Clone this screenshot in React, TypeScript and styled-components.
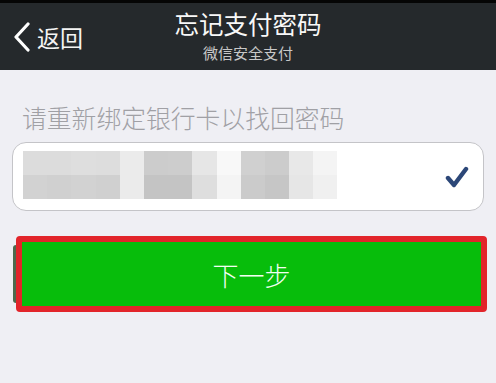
import React from 'react';
import styled, { createGlobalStyle } from 'styled-components';

const GlobalStyle = createGlobalStyle`
  html, body {
    margin: 0;
    padding: 0;
    background: #efeff4;
    font-family: "Noto Sans CJK SC", "Liberation Sans", sans-serif;
  }
`;

// mosaic over the card number, [top, bottom]
const mosaic: [string, string][] = [
  ['#dcdcdc', '#d2d2d2'],
  ['#dcdcdc', '#d0d0d0'],
  ['#dedede', '#d2d2d2'],
  ['#dddddd', '#d0d0d0'],
  ['#ebebeb', '#ebebeb'],
  ['#cccccc', '#c4c4c4'],
  ['#cdcdcd', '#c4c4c4'],
  ['#e6e6e6', '#dedede'],
  ['#f8f8f8', '#f4f4f4'],
  ['#d0d0d0', '#cbcbcb'],
  ['#cccccc', '#c6c6c6'],
  ['#e8e8e8', '#e6e6e6'],
  ['#f4f4f4', '#f0f0f0'],
];

const App: React.FC = () => {
  return (
    <>
      <GlobalStyle />
      <StyledPage>
        <StatusStrip />
        <StyledHeader>
          <BackButton>
            <svg width="18" height="30" viewBox="0 0 18 30">
              <polyline points="15,2 3,15 15,28" fill="none" stroke="#fff" strokeWidth="3.2" strokeLinecap="round" strokeLinejoin="round" />
            </svg>
            <span>返回</span>
          </BackButton>
          <TitleBox>
            <Title>忘记支付密码</Title>
            <SubTitle>微信安全支付</SubTitle>
          </TitleBox>
          <div />
        </StyledHeader>
        <StyledBody>
          <Label>请重新绑定银行卡以找回密码</Label>
          <CardInput>
            <Mosaic>
              {mosaic.map(([top, bottom], i) => (
                <MosaicCol key={i}>
                  <MosaicCell color={top} />
                  <MosaicCell color={bottom} />
                </MosaicCol>
              ))}
            </Mosaic>
            <svg width="24" height="22" viewBox="0 0 24 22">
              <path d="M3 12 L9 19 L21 3" fill="none" stroke="#2c4778" strokeWidth="4.4" strokeLinecap="round" strokeLinejoin="round" />
            </svg>
          </CardInput>
          <ButtonRow>
            <ButtonEdge />
            <NextButton>下一步</NextButton>
          </ButtonRow>
        </StyledBody>
      </StyledPage>
    </>
  );
};

const StyledPage = styled.div`
  width: 496px;
  height: 383px;
  display: flex;
  flex-direction: column;
  background: #efeff4;
  overflow: hidden;
`;

const StatusStrip = styled.div`
  height: 3px;
  background: #050505;
`;

const StyledHeader = styled.div`
  height: 67px;
  background: #25292c;
  display: grid;
  grid-template-columns: 1fr auto 1fr;
  align-items: center;
  color: #fff;
`;

const BackButton = styled.div`
  display: flex;
  align-items: center;
  gap: 6px;
  padding-left: 13px;
  padding-top: 1px;
  font-size: 23px;
  color: #f4f4f4;
  span {
    line-height: 1;
  }
`;

const TitleBox = styled.div`
  display: flex;
  flex-direction: column;
  align-items: center;
  gap: 6px;
  padding-bottom: 1px;
`;

const Title = styled.div`
  font-size: 24.5px;
  line-height: 28px;
  color: #f8f8f8;
`;

const SubTitle = styled.div`
  font-size: 15px;
  line-height: 18px;
  color: #c8c8c8;
`;

const StyledBody = styled.div`
  display: flex;
  flex-direction: column;
  padding: 0 12px;
`;

const Label = styled.div`
  margin-top: 31px;
  padding-left: 10px;
  font-size: 24.8px;
  font-weight: 300;
  line-height: 32px;
  color: #a0a0a5;
`;

const CardInput = styled.div`
  margin-top: 9px;
  height: 67px;
  background: #fff;
  border: 1px solid #c4c4c8;
  border-radius: 14px;
  display: flex;
  align-items: center;
  justify-content: space-between;
  padding: 0 14px 0 10px;
`;

const Mosaic = styled.div`
  display: flex;
  height: 48px;
  margin-top: -3px;
`;

const MosaicCol = styled.div`
  display: flex;
  flex-direction: column;
  width: 24.2px;
`;

const MosaicCell = styled.div<{ color: string }>`
  flex: 1;
  background: ${(props) => props.color};
`;

const ButtonRow = styled.div`
  margin-top: 25px;
  display: flex;
  align-items: center;
`;

const ButtonEdge = styled.div`
  width: 3px;
  height: 58px;
  margin-left: 1px;
  background: #4d6a4d;
  border-radius: 3px 0 0 3px;
`;

const NextButton = styled.div`
  flex: 1;
  margin-right: -3px;
  height: 64px;
  background: #07bd0b;
  border: 6.5px solid #e2242a;
  border-radius: 4px;
  display: flex;
  align-items: center;
  justify-content: center;
  font-size: 26px;
  font-weight: 300;
  color: #f2fff2;
`;

export default App;
